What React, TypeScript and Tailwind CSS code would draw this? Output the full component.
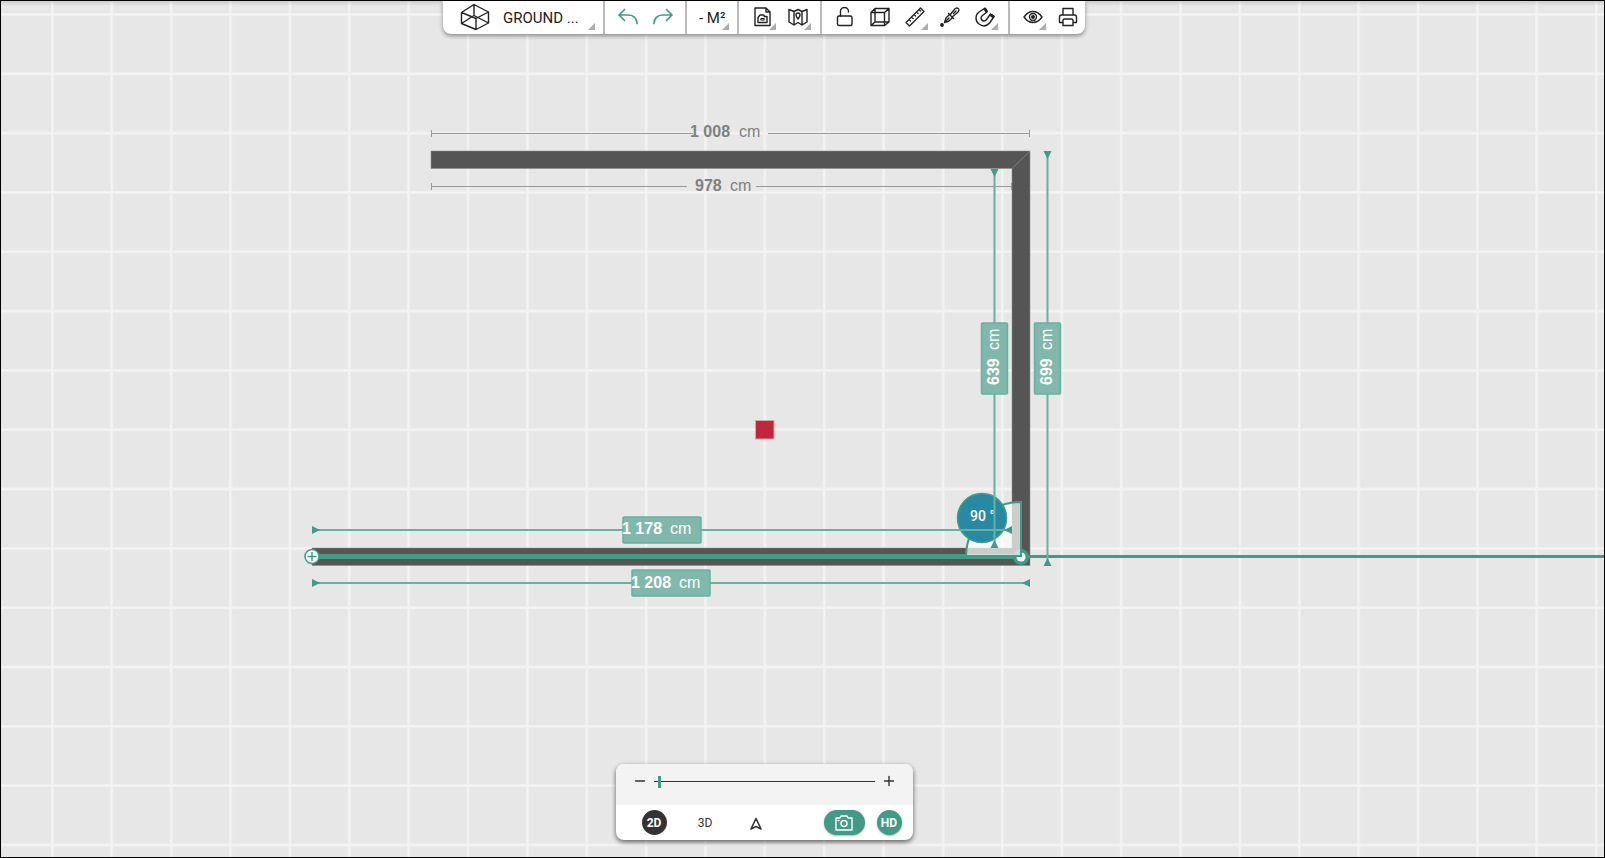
import React from 'react'
import { clsx } from 'clsx'

const GREEN = '#429b87'

interface IconProps {
  className?: string
  children: React.ReactNode
  viewBox?: string
}

function Icon({ className = 'h-5 w-5', viewBox = '0 0 20 20', children }: IconProps) {
  return (
    <svg
      className={className}
      viewBox={viewBox}
      fill="none"
      stroke="currentColor"
      strokeWidth="1.4"
      strokeLinecap="round"
      strokeLinejoin="round"
      aria-hidden="true"
    >
      {children}
    </svg>
  )
}

const icons = {
  logo: (
    <Icon className="h-7 w-8" viewBox="0 0 32 28">
      <path d="M15 1.5 29.5 9V20L17 26.5 2.5 20.5V9.5ZM2.5 9.5 17 15.5 29.5 9M15 1.5V12.5M17 15.5V26.5M2.5 20.5 15 12.5 29.5 20" />
    </Icon>
  ),
  undo: (
    <Icon>
      <path strokeWidth="1.7" d="M6.5 2.5 1 8l5.5 5.5M1 8h9.5c5 0 8.5 3.5 8.5 8.5" />
    </Icon>
  ),
  redo: (
    <Icon>
      <path strokeWidth="1.7" d="M13.5 2.5 19 8l-5.5 5.5M19 8H9.5C4.5 8 1 11.500 1 16.5" />
    </Icon>
  ),
  document: (
    <Icon>
      <path d="M2 1H13l4 4v13.500H2ZM13 1v4h4" />
      <path d="M5 15.5V10.500L7 8h3.500l1 1.500H14v6Z" />
      <path d="M8 11.500h3v1.500H8Z" strokeWidth="1.2" />
    </Icon>
  ),
  map: (
    <Icon>
      <path d="M1 2.500 6 4.500l4-2 4 2 5-2V15l-5 3-4-2.500L6 18l-5-3ZM6 4.500V18M14 4.500V18" />
      <path d="M10 12C8.300 9.800 8 9 8 8a2 2 0 0 1 4 0c0 1-.3 1.800-2 4Z" />
    </Icon>
  ),
  lock: (
    <Icon>
      <rect x="2.5" y="9" width="14.5" height="9.5" rx="1.5" />
      <path d="M5.5 9V5a4 4 0 0 1 8-1V5" />
    </Icon>
  ),
  cube: (
    <Icon>
      <path d="M1 5.5h13.5v13H1ZM5 1.5h14V15H5ZM1 5.5l4-4M14.5 5.5l4.5-4M14.500 18.500 19 15M1 18.500 5 15" />
    </Icon>
  ),
  ruler: (
    <Icon>
      <path d="M1 15.5 15.5 1 19 4.5 4.5 19ZM4 12.500l1.500 1.500M6.500 10 8 11.500M9 7.500 10.500 9M11.500 5 13 6.500M14 2.500 15.500 4" />
    </Icon>
  ),
  dropper: (
    <Icon>
      <path d="m8.500 6.500 5 5M10 8l4-5c1.500-2 3-2.500 4.200-1.500S19 4.500 17 6l-5 4" />
      <path d="M9.500 7.500 6 11l-1.500 4.500L9 14l3.500-3.500" />
      <path d="m13.500 6.500 2.500-2.500M6.500 13.500 9 11" />
      <circle cx="2" cy="18" r="1.200" fill="currentColor" />
    </Icon>
  ),
  magnet: (
    <Icon>
      <path d="M9.500 1.500 4 5C0 8 0 14 4 17c4 3 8 2 11-1.500l4-6L15.500 7l-4 5.500c-1.500 2-3.500 2-4.700.5-1.300-1.500-.8-3.500.7-4.500L12 5Z" />
      <path strokeWidth="3" d="m10 2 1.300 2M16.300 8.300l1.700 1.200" />
    </Icon>
  ),
  eye: (
    <Icon>
      <path d="M1 10c5-7.300 13-7.300 18 0-5 7.300-13 7.300-18 0Z" />
      <circle cx="10" cy="10" r="3.5" />
      <circle cx="10" cy="10" r="1.3" fill="currentColor" />
    </Icon>
  ),
  printer: (
    <Icon>
      <path d="M5 8V1.5h10V8M5 15.5H1.5V10c0-1.2.8-2 2-2h13c1.2 0 2 .8 2 2v5.500H15M5 18.500V13l1-1h8l1 1v5.500Z" />
    </Icon>
  ),
  camera: (
    <Icon className="h-4 w-5" viewBox="0 0 20 16">
      <path d="M2 3h4l1-2h6l1 2h4v12H2Z" />
      <circle cx="10" cy="8.5" r="3" />
      <path d="M4 5.5h1" />
    </Icon>
  ),
  navigation: (
    <Icon className="h-4 w-4" viewBox="0 0 16 16">
      <path d="M8 3.500 3 14 8 11.500 13 14Z" strokeWidth="1.6" />
    </Icon>
  ),
}

interface ToolProps {
  label: string
  className?: string
  hasMenu?: boolean
  children: React.ReactNode
}

function Tool({ label, className = 'w-[35px] justify-center', hasMenu, children }: ToolProps) {
  return (
    <button type="button" aria-label={label} className={clsx('relative flex h-8 items-center', className)}>
      {children}
      {hasMenu && (
        <svg className="absolute right-1 bottom-[3px] h-[7px] w-[7px]" viewBox="0 0 6 6" aria-hidden="true">
          <path d="M6 0V6H0Z" fill="#adadad" />
        </svg>
      )}
    </button>
  )
}

function Toolbar() {
  return (
    <header className="flex h-[33px] divide-x-2 divide-[#bbb] rounded-b-lg bg-white text-[#222] shadow-[0_2px_4px_rgba(0,0,0,0.4)]">
      <div className="flex pr-1 pl-4">
        <Tool label="Floor" className="w-[140px] gap-3" hasMenu>
          {icons.logo}
          <span className="pt-0.5 text-[15px]">GROUND ...</span>
        </Tool>
      </div>
      <div className="flex px-[5px] text-[#429b87]">
        <Tool label="Undo">{icons.undo}</Tool>
        <Tool label="Redo">{icons.redo}</Tool>
      </div>
      <div className="flex pr-1 pl-3">
        <Tool label="Area" className="w-[34px] text-[15px]" hasMenu>
          <span className="pt-0.5">- M²</span>
        </Tool>
      </div>
      <div className="flex pr-[5px] pl-1.5">
        <Tool label="Import plan" hasMenu>{icons.document}</Tool>
        <Tool label="Map" hasMenu>{icons.map}</Tool>
      </div>
      <div className="flex pr-1.5 pl-[5px]">
        <Tool label="Unlock">{icons.lock}</Tool>
        <Tool label="Volume">{icons.cube}</Tool>
        <Tool label="Measure" hasMenu>{icons.ruler}</Tool>
        <Tool label="Pick material">{icons.dropper}</Tool>
        <Tool label="Snapping" hasMenu>{icons.magnet}</Tool>
      </div>
      <div className="flex pl-[5px]">
        <Tool label="Visibility" hasMenu>{icons.eye}</Tool>
        <Tool label="Print">{icons.printer}</Tool>
      </div>
    </header>
  )
}

interface DimensionTextProps {
  value: string
  unitX: number
  transform: string
  fill?: string
}

function DimensionText({ value, unitX, transform, fill = '#fff' }: DimensionTextProps) {
  return (
    <text transform={transform} fill={fill} fontFamily="'Liberation Sans', Arial, sans-serif" fontSize="16">
      <tspan className="font-bold">{value}</tspan>
      <tspan x={unitX}>cm</tspan>
    </text>
  )
}

function FloorPlan() {
  return (
    <svg className="absolute inset-0 h-full w-full" role="img" aria-label="Floor plan">
      <defs>
        <pattern id="grid" x="51" y="13" width="59.38" height="59.32" patternUnits="userSpaceOnUse">
          <path d="M1.3 0V60M0 1.5H60" stroke="#f3f3f3" strokeWidth="2.4" />
        </pattern>
        <linearGradient id="topShade" x2="0" y2="1">
          <stop offset="0" stopColor="#000" stopOpacity="0.14" />
          <stop offset="1" stopColor="#000" stopOpacity="0" />
        </linearGradient>
      </defs>
      <rect width="100%" height="100%" fill="url(#grid)" />
      <rect width="100%" height="6" fill="url(#topShade)" />

      {/* walls */}
      <g fill="#555" stroke="#888" strokeWidth="0.5">
        <path d="M431 151H1030V565.5H312V548H1012V168.5H431Z" />
        <path d="M1012 168.5 1030 151" strokeWidth="0.8" />
      </g>
      <rect x="756" y="421" width="17.5" height="17.5" fill="#c1263b" stroke="#c1263b" strokeOpacity="0.35" strokeWidth="2" />

      {/* passive dimensions */}
      <g stroke="#999" strokeWidth="1">
        <path d="M431.5 133.5H693M768 133.5H1029.5M431.5 130V137M1029.5 130V137" />
        <path d="M431.5 186.5H687M756 186.5H1011.5M431.5 183V190M1011.5 183V190" />
      </g>
      <DimensionText value="1 008" unitX={49} transform="translate(690 137)" fill="#808080" />
      <DimensionText value="978" unitX={35} transform="translate(695 191)" fill="#808080" />

      {/* wall axis and angle */}
      <line x1="312" y1="556.5" x2="1021" y2="556.5" stroke={GREEN} strokeWidth="5" />
      <line x1="1021" y1="556.5" x2="100%" y2="556.5" stroke={GREEN} strokeWidth="3" />
      <circle cx="1021" cy="557" r="8" fill={GREEN} />
      <circle cx="1021" cy="557" r="4.5" fill="#fff" />
      <path d="M1016 552h5v5h-5Z" fill={GREEN} />
      <path d="M1021 502A55 55 0 0 0 966 556H1021Z" fill="#fff" fillOpacity="0.7" stroke={GREEN} strokeWidth="2" />
      <circle cx="982" cy="518" r="24.5" fill="#2889a3" stroke={GREEN} strokeWidth="1.5" />
      <text x="970" y="521" fill="#fff" className="text-[14px] font-medium">90 °</text>
      <circle cx="312" cy="556.5" r="7" fill="#fff" stroke={GREEN} strokeWidth="1.5" />
      <path d="M307.5 556.5h9M312 552v9" stroke={GREEN} strokeWidth="1.5" />

      {/* active dimensions */}
      <path d="M994.5 169V547M1047.5 152V565M313 530H1011M313 583H1029" stroke="#68b09f" strokeWidth="2" />
      <g fill={GREEN}>
        <path d="M990.5 169h8l-4 8ZM990.5 548h8l-4-8Z" />
        <path d="M1043.5 151h8l-4 8ZM1043.5 566h8l-4-8Z" />
        <path d="M312 526v8l8-4ZM1012 526v8l-8-4Z" />
        <path d="M312 579v8l8-4ZM1030 579v8l-8-4Z" />
      </g>
      <g fill="#80b8ab" stroke="#68b09f" strokeWidth="1.5">
        <rect x="981.5" y="323" width="26" height="71" rx="1" />
        <rect x="1034.5" y="323" width="26" height="71" rx="1" />
        <rect x="623" y="517" width="78" height="26" rx="1" />
        <rect x="632" y="570" width="78" height="26" rx="1" />
      </g>
      <DimensionText value="639" unitX={35} transform="translate(999 385) rotate(-90)" />
      <DimensionText value="699" unitX={35} transform="translate(1052 385) rotate(-90)" />
      <DimensionText value="1 178" unitX={48} transform="translate(622 534)" />
      <DimensionText value="1 208" unitX={48} transform="translate(631 588)" />
    </svg>
  )
}

const sliderTrack =
  '[&::-webkit-slider-runnable-track]:h-px [&::-webkit-slider-runnable-track]:bg-[#333]'
const sliderThumb =
  '[&::-webkit-slider-thumb]:-mt-[5px] [&::-webkit-slider-thumb]:h-3 [&::-webkit-slider-thumb]:w-[3px] [&::-webkit-slider-thumb]:appearance-none [&::-webkit-slider-thumb]:bg-[#429b87]'

function ViewPanel() {
  return (
    <footer className="w-[297px] overflow-hidden rounded-lg bg-white text-[#333] shadow-[0_2px_5px_rgba(0,0,0,0.6)]">
      <div className="flex h-[41px] items-start gap-2 bg-[#f3f3f3] px-[18px] pt-[9px]">
        <button type="button" aria-label="Zoom out" className="flex h-4 w-3 items-center justify-center">
          <Icon className="h-3 w-3" viewBox="0 0 12 12"><path d="M1.5 6h9" /></Icon>
        </button>
        <input
          type="range"
          aria-label="Zoom"
          min={0}
          max={100}
          defaultValue={2}
          className={clsx('h-4 min-w-0 flex-1 appearance-none bg-transparent', sliderTrack, sliderThumb)}
        />
        <button type="button" aria-label="Zoom in" className="flex h-4 w-3 items-center justify-center">
          <Icon className="h-3 w-3" viewBox="0 0 12 12"><path d="M1.5 6h9M6 1.5v9" /></Icon>
        </button>
      </div>
      <div className="flex h-[35px] items-center px-[11px] text-xs">
        <div className="flex flex-1 gap-[26px] pl-[15px]">
          <button type="button" className="h-[25px] w-[25px] rounded-full bg-[#363433] font-bold text-white">2D</button>
          <button type="button" className="h-[25px] w-[25px]">3D</button>
          <button type="button" aria-label="First person" className="flex h-[25px] w-[25px] items-center justify-center">
            {icons.navigation}
          </button>
        </div>
        <div className="flex gap-3">
          <button
            type="button"
            aria-label="Take a picture"
            className="flex h-[25px] w-[41px] items-center justify-center rounded-full bg-[#429b87] text-white shadow-[0_1px_2px_rgba(0,0,0,0.3)]"
          >
            {icons.camera}
          </button>
          <button type="button" className="h-[25px] w-[25px] rounded-full bg-[#429b87] font-bold text-white shadow-[0_1px_2px_rgba(0,0,0,0.3)]">
            HD
          </button>
        </div>
      </div>
    </footer>
  )
}

export default function App() {
  return (
    <div className="relative h-screen overflow-hidden bg-[#e7e7e7] font-[Roboto,sans-serif]">
      <FloorPlan />
      <div className="relative flex h-full flex-col items-center justify-between border border-black pr-[77px] pb-[17px]">
        <Toolbar />
        <ViewPanel />
      </div>
    </div>
  )
}
